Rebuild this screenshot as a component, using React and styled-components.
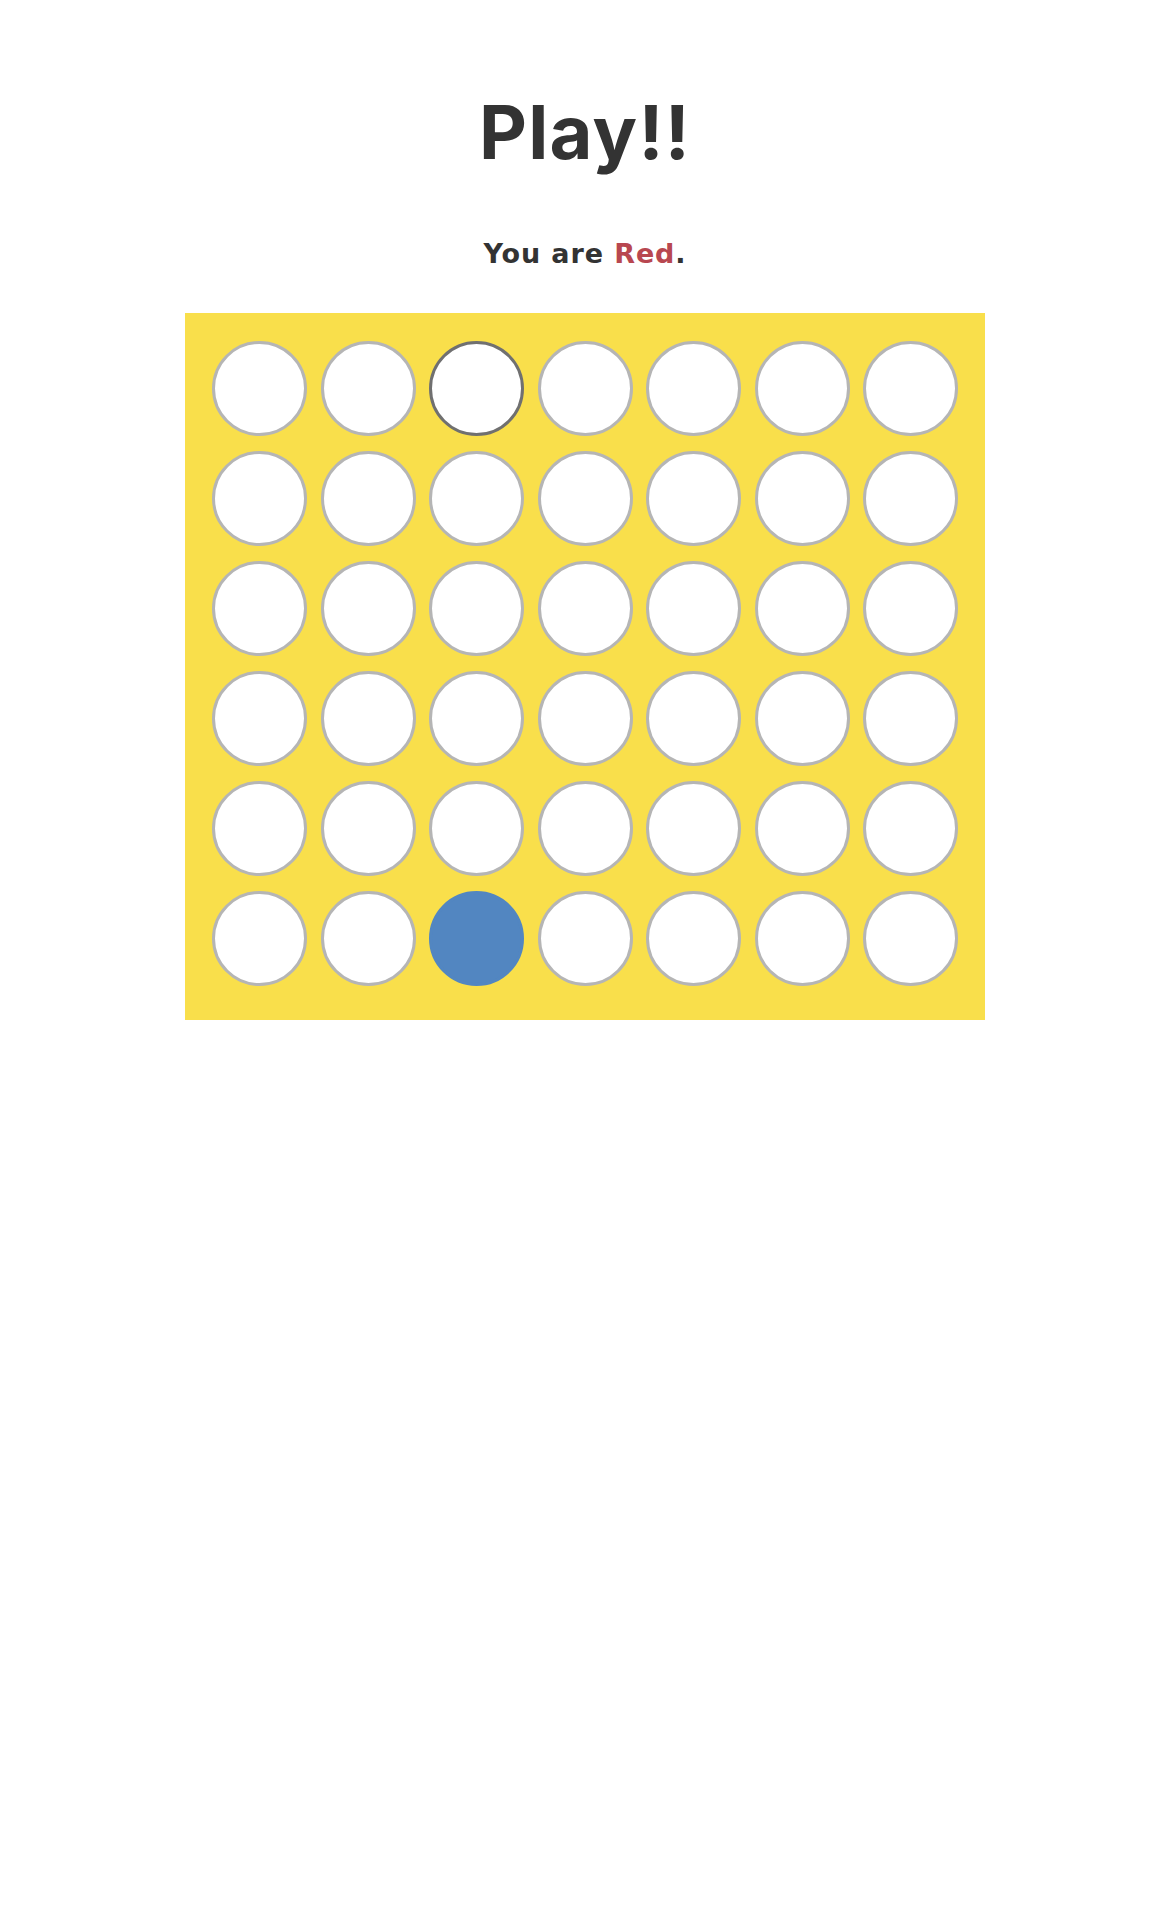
import React from "react";
import styled, { createGlobalStyle } from "styled-components";

const Global = createGlobalStyle`
  html, body { margin: 0; padding: 0; background: #ffffff; }
  body { font-family: Inter, "Open Sans", Arial, sans-serif; color: #333333; }
`;

const Page = styled.main`
  display: flex;
  flex-direction: column;
  align-items: center;
  min-height: 1907px;
`;

const Title = styled.h1`
  margin: 95px 0 0;
  font-size: 74px;
  line-height: 1;
  font-weight: 700;
  letter-spacing: 1.3px;
  color: #333333;
`;

const Subtitle = styled.p`
  margin: 71px 0 0;
  font-family: "DejaVu Sans", Inter, sans-serif;
  font-size: 27px;
  line-height: 1;
  font-weight: 700;
  letter-spacing: 0.9px;
  color: #333333;
`;

const Player = styled.span`
  color: #b84750;
`;

const Board = styled.div`
  margin-top: 46px;
  width: 800px;
  box-sizing: border-box;
  padding: 28px 27px 34px;
  background: #f9df4b;
  display: grid;
  grid-template-columns: repeat(7, 95px);
  grid-auto-rows: 95px;
  column-gap: 13.5px;
  row-gap: 15px;
`;

const Slot = styled.div`
  box-sizing: border-box;
  width: 95px;
  height: 95px;
  border-radius: 50%;
  background: ${(p) => (p.$disc === "blue" ? "#5286c1" : "#ffffff")};
  border: 3px solid
    ${(p) =>
      p.$disc === "blue" ? "#5286c1" : p.$hover ? "#707070" : "#b5b5b5"};
`;

const ROWS = 6;
const COLS = 7;

export default function App() {
  const cells = [];
  for (let r = 0; r < ROWS; r++) {
    for (let c = 0; c < COLS; c++) {
      const disc = r === 5 && c === 2 ? "blue" : null;
      const hover = r === 0 && c === 2;
      cells.push(<Slot key={`${r}-${c}`} $disc={disc} $hover={hover} />);
    }
  }
  return (
    <>
      <Global />
      <Page>
        <Title>Play!!</Title>
        <Subtitle>
          You are <Player>Red</Player>.
        </Subtitle>
        <Board>{cells}</Board>
      </Page>
    </>
  );
}
